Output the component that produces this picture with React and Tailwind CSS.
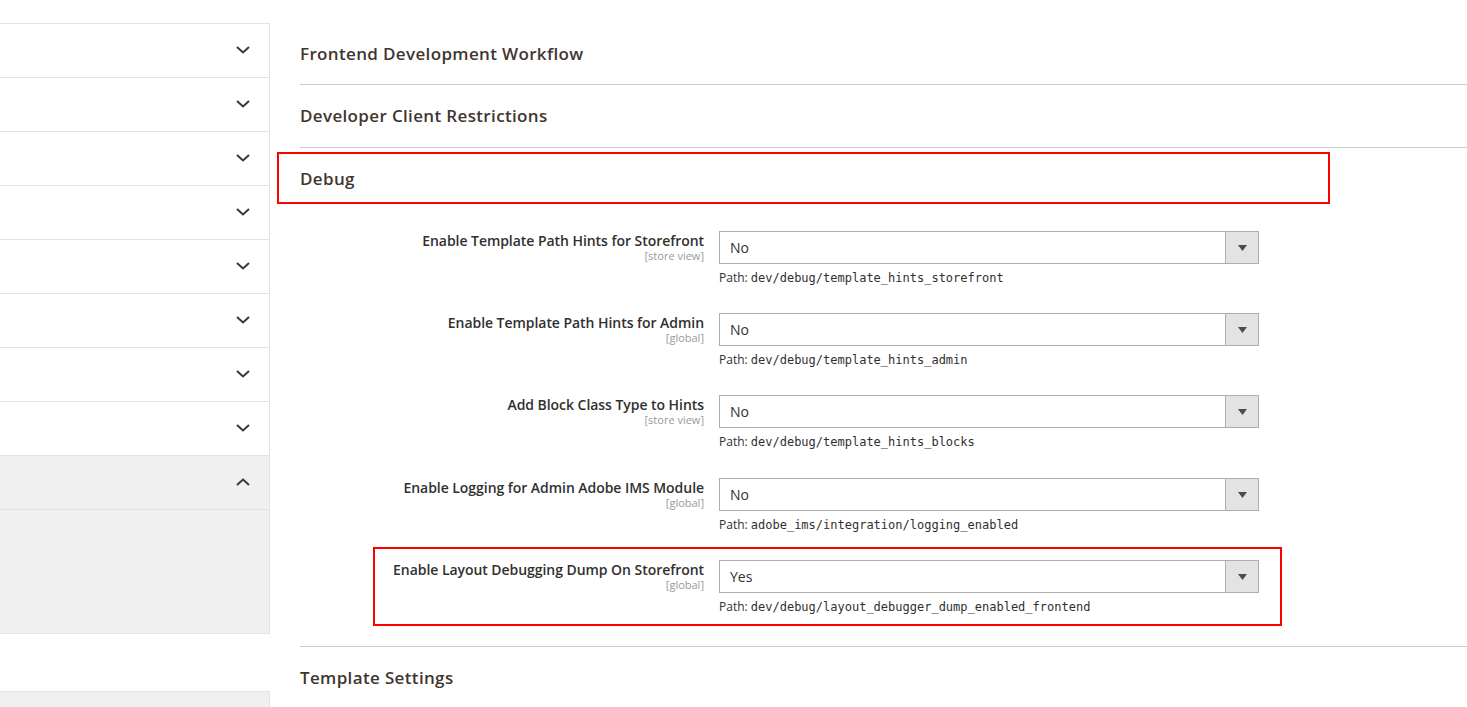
import React from 'react';

const font = { fontFamily: '"Open Sans", "Noto Sans", sans-serif' };

function Chevron({ up }) {
  return (
    <svg width="14" height="8" viewBox="0 0 14 8" className="text-[#41362f]">
      {up ? (
        <path d="M1 7 L7 1.5 L13 7" fill="none" stroke="currentColor" strokeWidth="2" />
      ) : (
        <path d="M1 1 L7 6.5 L13 1" fill="none" stroke="currentColor" strokeWidth="2" />
      )}
    </svg>
  );
}

function Sidebar() {
  const items = [0, 1, 2, 3, 4, 5, 6, 7];
  return (
    <div className="w-[270px] shrink-0 pt-[23px]">
      <div className="border-t border-r border-[#e3e3e3]">
        {items.map((i) => (
          <div key={i} className="h-[54px] border-b border-[#e3e3e3] flex items-center justify-end pr-[19px] pb-[2px]">
            <Chevron />
          </div>
        ))}
        <div className="h-[54px] border-b border-[#e3e3e3] bg-[#f0f0f0] flex items-center justify-end pr-[19px] pb-[2px]">
          <Chevron up />
        </div>
        <div className="h-[124px] border-b border-[#e3e3e3] bg-[#f0f0f0]"></div>
      </div>
      <div className="mt-[57px] h-[30px] border-t border-r border-[#e3e3e3] bg-[#f0f0f0]"></div>
    </div>
  );
}

function SectionTitle({ children, border = true, height = 'h-[63px]', annotate = false }) {
  return (
    <div className={`relative ${height} flex items-center ${border ? 'border-t border-[#cccccc]' : ''}`}>
      <span className="text-[17px] font-semibold text-[#41362f] tracking-[0.35px]">{children}</span>
      {annotate && (
        <div className="absolute left-[-23px] top-[4px] w-[1053px] h-[52px] border-2 border-[#ff0000]"></div>
      )}
    </div>
  );
}

function Field({ label, scope, value, path, annotate = false, gap = 'mt-[27px]' }) {
  return (
    <div className={`relative flex ${gap}`}>
      <div className="w-[404px] shrink-0 text-right pt-[1px]">
        <div className="text-[14px] font-semibold text-[#303030] leading-[18px] tracking-[-0.05px]">{label}</div>
        <div className="text-[11px] text-[#999999] leading-[12px]">{scope}</div>
      </div>
      <div className="ml-[15px]">
        <div className="w-[540px] h-[33px] border border-[#adadad] flex items-stretch bg-white">
          <div className="flex-1 pl-[10px] flex items-center text-[14px] text-[#303030]">{value}</div>
          <div className="w-[33px] border-l border-[#adadad] bg-[#e3e3e3] flex items-center justify-center">
            <svg width="9" height="6" viewBox="0 0 9 6">
              <path d="M0 0 H9 L4.5 6 Z" fill="#514943" />
            </svg>
          </div>
        </div>
        <div className="mt-[6px] text-[12px] text-[#303030] leading-[16px]">
          Path: <span style={{ fontFamily: '"DejaVu Sans Mono", monospace' }} className="text-[12px]">{path}</span>
        </div>
      </div>
      {annotate && (
        <div className="absolute left-[73px] top-[-13px] w-[909px] h-[79px] border-2 border-[#ff0000]"></div>
      )}
    </div>
  );
}

export default function App() {
  return (
    <div className="w-[1467px] h-[707px] overflow-hidden bg-white flex" style={font}>
      <Sidebar />
      <div className="flex-1 ml-[30px] pt-[23px]">
        <SectionTitle border={false} height="h-[61px]">Frontend Development Workflow</SectionTitle>
        <SectionTitle>Developer Client Restrictions</SectionTitle>
        <SectionTitle annotate>Debug</SectionTitle>
        <div className="pb-[31px]">
          <Field
            gap="mt-[21px]"
            label="Enable Template Path Hints for Storefront"
            scope="[store view]"
            value="No"
            path="dev/debug/template_hints_storefront"
          />
          <Field
            label="Enable Template Path Hints for Admin"
            scope="[global]"
            value="No"
            path="dev/debug/template_hints_admin"
          />
          <Field
            label="Add Block Class Type to Hints"
            scope="[store view]"
            value="No"
            path="dev/debug/template_hints_blocks"
          />
          <Field
            gap="mt-[28px]"
            label="Enable Logging for Admin Adobe IMS Module"
            scope="[global]"
            value="No"
            path="adobe_ims/integration/logging_enabled"
          />
          <Field
            annotate
            label="Enable Layout Debugging Dump On Storefront"
            scope="[global]"
            value="Yes"
            path="dev/debug/layout_debugger_dump_enabled_frontend"
          />
        </div>
        <SectionTitle>Template Settings</SectionTitle>
      </div>
    </div>
  );
}
